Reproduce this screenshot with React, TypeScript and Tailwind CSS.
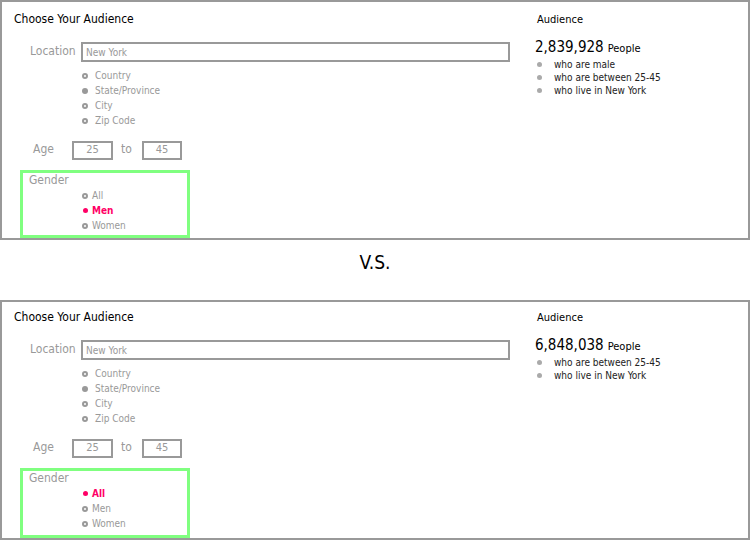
import type { ReactNode } from "react";

/** Options for the location radio list. */
const LOCATION_TYPES = ["Country", "State/Province", "City", "Zip Code"];

/** Options for the gender radio list. */
const GENDERS = ["All", "Men", "Women"];

/** One audience comparison panel. */
interface AudienceCase {
  people: string;
  gender: string;
  bullets: string[];
}

const CASES: AudienceCase[] = [
  {
    people: "2,839,928",
    gender: "Men",
    bullets: ["who are male", "who are between 25-45", "who live in New York"],
  },
  {
    people: "6,848,038",
    gender: "All",
    bullets: ["who are between 25-45", "who live in New York"],
  },
];

/** Small ring used for unselected radios. */
const Ring = () => (
  <span className="block w-[6px] h-[6px] rounded-full border-2 border-[#999] bg-white" />
);

/** Small filled dot. */
const Dot = ({ className }: { className: string }) => (
  <span className={`block rounded-full ${className}`} />
);

const SmallBox = ({ children }: { children: ReactNode }) => (
  <div className="h-[19px] border-2 border-[#999] flex items-center justify-center text-[11px] text-[#999]">
    {children}
  </div>
);

/** React component that renders one "Choose Your Audience" panel. */
const AudiencePanel = ({
  data,
  first,
}: {
  data: AudienceCase;
  first: boolean;
}) => {
  return (
    <div className="h-[240px] w-[750px] border-2 border-[#999] flex flex-row">
      <div className={`flex flex-col w-[533px] ${first ? "pt-[9px]" : "pt-[7px]"}`}>
        <div className="pl-[12px] leading-[16px] text-[12px] font-medium text-black">
          Choose Your Audience
        </div>

        <div className="flex flex-row items-center h-[20px] mt-[15px]">
          <div className="w-[79px] pl-[28px] pb-[2px] leading-[14px] text-[12px] text-[#999]">
            Location
          </div>
          <div className="w-[429px] h-[20px] border-2 border-[#999] flex items-center pl-[3px] text-[10px] text-[#999]">
            New York
          </div>
        </div>

        <div className="flex flex-col pl-[80px] mt-[6px]">
          {LOCATION_TYPES.map((t) => (
            <div key={t} className="flex flex-row items-center gap-[7px] h-[15px] text-[10px] text-[#999]">
              {t === "State/Province" ? (
                <Dot className="w-[6px] h-[6px] bg-[#999]" />
              ) : (
                <Ring />
              )}
              <span>{t}</span>
            </div>
          ))}
        </div>

        <div className="flex flex-row items-center h-[19px] mt-[13px]">
          <div className="w-[70px] pl-[31px] pb-[3px] leading-[14px] text-[12px] text-[#999]">Age</div>
          <div className="w-[41px]">
            <SmallBox>25</SmallBox>
          </div>
          <div className="w-[29px] pl-[8px] pb-[3px] leading-[14px] text-[12px] text-[#999]">to</div>
          <div className="w-[40px]">
            <SmallBox>45</SmallBox>
          </div>
        </div>

        <div
          className={`ml-[18px] mt-[10px] w-[170px] border-[3px] border-[#80ff80] flex flex-col relative ${
            first ? "h-[70px]" : "h-[72px]"
          }`}
        >
          <div className="pl-[6px] leading-[15px] text-[12px] text-[#999]">Gender</div>
          <div className="flex flex-col pl-[59px]">
            {GENDERS.map((g) => {
              const on = g === data.gender;
              return (
                <div
                  key={g}
                  className={`flex flex-row items-center gap-[4px] h-[15px] text-[10px] ${
                    on ? "text-[#ff0066] font-semibold" : "text-[#999]"
                  }`}
                >
                  {on ? <Dot className="w-[5px] h-[5px] mx-[0.5px] bg-[#ff0066]" /> : <Ring />}
                  <span>{g}</span>
                </div>
              );
            })}
          </div>
        </div>
      </div>

      <div className={`flex flex-col ${first ? "pt-[9px]" : "pt-[7px]"}`}>
        <div className="pl-[2px] mt-[1px] leading-[16px] text-[11px] font-medium text-black">Audience</div>
        <div className="flex flex-row items-baseline mt-[10px] leading-[18px]">
          <span className="text-[15px] font-medium text-black">{data.people}</span>
          <span className="ml-[4px] text-[11px] font-medium text-black">People</span>
        </div>
        <div className="flex flex-col">
          {data.bullets.map((b) => (
            <div key={b} className="flex flex-row items-center h-[13px] text-[10px] text-[#222]">
              <Dot className="ml-[2px] w-[5px] h-[5px] bg-[#aaa]" />
              <span className="ml-[12px]">{b}</span>
            </div>
          ))}
        </div>
      </div>
    </div>
  );
};

/** The whole comparison page. */
export default function App() {
  return (
    <div className="w-[750px] h-[550px] bg-white overflow-hidden font-['DejaVu_Sans_Condensed','Liberation_Sans_Narrow',sans-serif]">
      <AudiencePanel data={CASES[0]} first />
      <div className="h-[60px] pt-[11px] text-center leading-[22px] text-[19px] text-black">
        V.S.
      </div>
      <AudiencePanel data={CASES[1]} first={false} />
    </div>
  );
}
